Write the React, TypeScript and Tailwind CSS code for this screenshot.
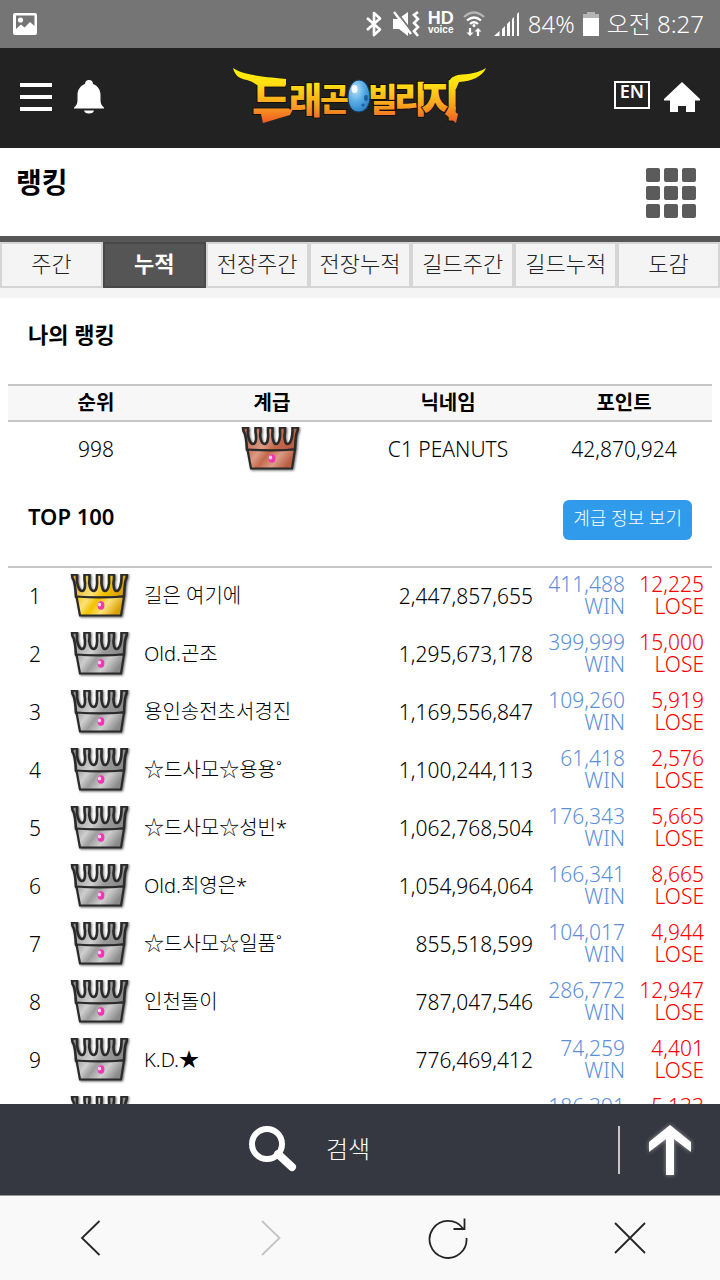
const WEEK_TABS = ["주간", "누적", "전장주간", "전장누적", "길드주간", "길드누적", "도감"];

type CrownTone = "gold" | "silver" | "bronze";

type Player = {
  rank: number;
  tone: CrownTone;
  name: string;
  points: string;
  win: string;
  lose: string;
};

const PLAYERS: Player[] = [
  { rank: 1, tone: "gold", name: "길은 여기에", points: "2,447,857,655", win: "411,488", lose: "12,225" },
  { rank: 2, tone: "silver", name: "Old.곤조", points: "1,295,673,178", win: "399,999", lose: "15,000" },
  { rank: 3, tone: "silver", name: "용인송전초서경진", points: "1,169,556,847", win: "109,260", lose: "5,919" },
  { rank: 4, tone: "silver", name: "☆드사모☆용용˚", points: "1,100,244,113", win: "61,418", lose: "2,576" },
  { rank: 5, tone: "silver", name: "☆드사모☆성빈*", points: "1,062,768,504", win: "176,343", lose: "5,665" },
  { rank: 6, tone: "silver", name: "Old.최영은*", points: "1,054,964,064", win: "166,341", lose: "8,665" },
  { rank: 7, tone: "silver", name: "☆드사모☆일품˚", points: "855,518,599", win: "104,017", lose: "4,944" },
  { rank: 8, tone: "silver", name: "인천돌이", points: "787,047,546", win: "286,772", lose: "12,947" },
  { rank: 9, tone: "silver", name: "K.D.★", points: "776,469,412", win: "74,259", lose: "4,401" },
  { rank: 10, tone: "silver", name: "", points: "", win: "186,391", lose: "5,133" },
];

// edge, shine, base
const TONES: Record<CrownTone, [string, string, string]> = {
  gold: ["#d9a006", "#fbe27c", "#f2c200"],
  silver: ["#8a8a8a", "#cfcfcf", "#9c9c9c"],
  bronze: ["#b85e43", "#dc9c85", "#c4694c"],
};

function Crown({ tone, id }: { tone: CrownTone; id: string }) {
  const [edge, shine, base] = TONES[tone];
  return (
    <svg width="62" height="46" viewBox="0 0 62 46" className="block" aria-hidden="true">
      <defs>
        <linearGradient id={id} x1="0" y1="0" x2="1" y2="0.2">
          <stop offset="0" stopColor={edge} />
          <stop offset="0.5" stopColor={shine} />
          <stop offset="0.7" stopColor={base} />
          <stop offset="1" stopColor={edge} />
        </linearGradient>
        <linearGradient id={`${id}-band`} x1="0" y1="0" x2="1" y2="0.3">
          <stop offset="0" stopColor={base} />
          <stop offset="0.25" stopColor={shine} />
          <stop offset="0.45" stopColor={base} />
          <stop offset="0.7" stopColor={shine} />
          <stop offset="1" stopColor={edge} />
        </linearGradient>
        <filter id={`${id}-shadow`} x="-10%" y="-10%" width="120%" height="125%">
          <feDropShadow dx="1" dy="1" stdDeviation="1" floodColor="#000" floodOpacity="0.6" />
        </filter>
      </defs>
      <g filter={`url(#${id}-shadow)`} stroke="#2b2a29" strokeWidth="2.600" strokeLinejoin="round">
        <path
          d="M2 0.500 H7 V4 C6.500 8 8.500 17 12 17 C15.500 17 15.500 10 14.500 5 V0.500 H19.500 V5 C18.500 9 20 17 23.500 17 C27 17 27.500 10 27 5 V0.500 H31.500 V5 C31 9 32 17 35 17 C38.500 17 39.500 9 39 5 V0.500 H44 V5 C43 9 43.500 17 46.500 17 C50 17 51.500 9 51.500 4 V0.500 H57 L56.500 4 C54.500 7 54.500 14 54 22.500 C38 24.500 20 24.500 6 23 C5.500 14 5 7 2.500 4 Z"
          fill={`url(#${id})`}
        />
        <path
          d="M6.500 22.500 C20 23.500 40 23.500 54 22.500 L51 41.500 H10 Z"
          fill={`url(#${id}-band)`}
          strokeWidth="2.200"
        />
      </g>
      <ellipse cx="31" cy="31.500" rx="3.400" ry="4.200" fill="#f235b4" />
      <ellipse cx="29.500" cy="30.500" rx="1.700" ry="2" fill="#ffd0ee" />
    </svg>
  );
}

function StatusBar() {
  return (
    <div className="flex h-12 shrink-0 items-center justify-between bg-[#757575] pr-4 pl-3 text-white">
      <svg width="26" height="24" viewBox="0 0 26 24" aria-hidden="true">
        <path
          fillRule="evenodd"
          fill="#fff"
          d="M3 1 H23 Q25 1 25 3 V21 Q25 23 23 23 H3 Q1 23 1 21 V3 Q1 1 3 1 Z M4 3.500 V17 L9 12.500 L12.500 15.500 L18 10 L22.500 14 V3.500 Z"
        />
        <circle cx="8.500" cy="8" r="2.600" fill="#fff" />
      </svg>
      <div className="flex items-center gap-2">
        <svg width="20" height="26" viewBox="0 0 20 26" fill="none" stroke="#fff" strokeWidth="2.600" aria-hidden="true">
          <path d="M3 7 L16 18.500 L10 24 V2 L16 7.500 L3 19" strokeLinejoin="round" />
        </svg>
        <svg width="28" height="26" viewBox="0 0 28 26" aria-hidden="true">
          <path d="M1 8 H6 L16 1 V25 L7 18 H1 Z" fill="#fff" />
          <path d="M4 0 L20 21" stroke="#757575" strokeWidth="2" />
          <path d="M2 1 L19 23" stroke="#fff" strokeWidth="2.400" />
          <path d="M26 1 L22 4 L26 8 L22 12 L26 16 L22 20 L26 25" stroke="#fff" strokeWidth="2.600" fill="none" />
        </svg>
        <div className="text-center font-['Liberation_Sans',sans-serif] font-bold">
          <div className="text-lg leading-3">HD</div>
          <div className="text-[10px] leading-3">voice</div>
        </div>
        <svg width="24" height="26" viewBox="0 0 24 26" fill="none" strokeWidth="2.200" aria-hidden="true">
          <path d="M2 6 Q12 -3 22 6" stroke="#b5b5b5" />
          <path d="M5 9.500 Q12 3.500 19 9.500" stroke="#fff" />
          <path d="M8 13 Q12 9.500 16 13" stroke="#fff" />
          <circle cx="12" cy="14.500" r="1.500" fill="#fff" />
          <path d="M8 17 V23 M16 25 V19" stroke="#fff" />
          <path d="M4.500 21.500 H11.500 L8 25 Z M12.500 20.500 H19.500 L16 17 Z" fill="#fff" />
        </svg>
        <svg width="26" height="26" viewBox="0 0 26 26" fill="#fff" aria-hidden="true">
          <path d="M0 25 L5.500 20 V25 Z M8 18 L11 15 V25 H8 Z M13 13 L16 10 V25 H13 Z M18 8 L20 6 V25 H18 Z M23 3 L25 1 V25 H23 Z" />
        </svg>
        <span className="text-2xl font-light">84%</span>
        <svg width="16" height="26" viewBox="0 0 16 26" aria-hidden="true">
          <path d="M4 1 H12 V3 H16 V7 H0 V3 H4 Z" fill="#b5b5b5" />
          <path d="M0 7 H16 V25 H0 Z" fill="#fff" />
        </svg>
        <span className="text-2xl font-light">오전 8:27</span>
      </div>
    </div>
  );
}

function Logo() {
  return (
    <svg width="256" height="64" viewBox="0 0 256 64" className="block" role="img" aria-label="드래곤빌리지">
      <defs>
        <linearGradient id="fire" gradientUnits="userSpaceOnUse" x1="0" y1="4" x2="0" y2="58">
          <stop offset="0" stopColor="#fff200" />
          <stop offset="0.3" stopColor="#ffdc14" />
          <stop offset="0.65" stopColor="#f9a51f" />
          <stop offset="1" stopColor="#f15a24" />
        </linearGradient>
        <radialGradient id="egg" cx="0.35" cy="0.3" r="0.75">
          <stop offset="0" stopColor="#b9e2f9" />
          <stop offset="0.5" stopColor="#5aaee6" />
          <stop offset="1" stopColor="#2a7fc4" />
        </radialGradient>
      </defs>
      <g
        fill="url(#fire)"
        stroke="#15100c"
        strokeWidth="2"
        paintOrder="stroke"
        className="font-['Noto_Sans_CJK_KR',sans-serif] font-black"
      >
        <text x="20" y="49" fontSize="42">드</text>
        <text x="57" y="49" fontSize="36">래</text>
        <text x="88" y="46" fontSize="32">곤</text>
        <text x="136" y="46" fontSize="32">빌</text>
        <text x="162" y="48" fontSize="36">리</text>
        <text x="189" y="51" fontSize="42">지</text>
      </g>
      <g fill="url(#fire)">
        <path d="M1 3 C10 9 22 11 54 14 V20 H25 C21 17 18 16 15 15 C8 14 3 11 1 3 Z" />
        <path d="M254 3 C246 8 238 9 226 10 C219 12 217 15 217 18 V24 H224 L227 17 C240 16 250 12 254 3 Z" />
        <path d="M29 49 L61 44 L58 50 L31 58 Z" />
        <path d="M217 42 H224 L223 47 L226 49 L224 58 L213 49 Z" />
      </g>
      <path
        d="M127 15 C135 15 138 26 138 32 C138 41 133 47 127 47 C120 47 116 41 116 32 C116 24 120 15 127 15 Z"
        fill="url(#egg)"
        stroke="#123a5c"
      />
      <ellipse cx="122.500" cy="24" rx="3" ry="4" fill="#fff" opacity="0.9" />
      <ellipse cx="134" cy="33" rx="2" ry="3" fill="#1d5f9c" />
      <circle cx="131" cy="40" r="1.500" fill="#1d5f9c" />
    </svg>
  );
}

function Header() {
  return (
    <header className="flex h-[100px] shrink-0 items-center justify-between bg-[#222222] px-5 pb-[2px]">
      <div className="flex items-center gap-5">
        <button type="button" aria-label="메뉴" className="flex w-8 flex-col gap-2">
          <span className="h-1 bg-white" />
          <span className="h-1 bg-white" />
          <span className="h-1 bg-white" />
        </button>
        <button type="button" aria-label="알림">
          <svg width="34" height="34" viewBox="0 0 34 34" fill="#fff">
            <path d="M17 0 C19.500 0 21 1.500 21 4 C26 6 28.500 10 28.500 15 V20 C28.500 24 30 26 32 27.500 V28.500 H2 V27.500 C4 26 5.500 24 5.500 20 V15 C5.500 10 8 6 13 4 C13 1.500 14.500 0 17 0 Z" />
            <path d="M12 30.500 H22 C21.500 32.500 20 33.500 17 33.500 C14 33.500 12.500 32.500 12 30.500 Z" />
          </svg>
        </button>
      </div>
      <a href="#home">
        <Logo />
      </a>
      <div className="flex items-start gap-3">
        <button type="button" className="h-7 w-9 border-2 border-white pb-2 text-lg leading-4 font-semibold text-white">
          EN
        </button>
        <a href="#home" aria-label="홈">
          <svg width="38" height="32" viewBox="0 0 38 32" fill="#fff">
            <path d="M20 1 L38 18 V19.500 H33 V31 H24 V25 H16 V31 H8 V19.500 H2 V18 Z" />
          </svg>
        </a>
      </div>
    </header>
  );
}

function Tabs() {
  return (
    <nav className="grid grid-cols-7 border-t-6 border-[#575757] bg-[#f4f4f4] pb-[10px]">
      {WEEK_TABS.map((tab, i) => (
        <button
          key={tab}
          type="button"
          className={
            i === 1
              ? "h-[46px] border-2 border-[#484848] bg-[#555555] pb-1 text-[22px] leading-8 font-bold whitespace-nowrap text-white"
              : "h-[46px] border-2 border-[#d5d5d5] pb-1 text-[22px] leading-8 font-light whitespace-nowrap text-[#222222]"
          }
        >
          {tab}
        </button>
      ))}
    </nav>
  );
}

function MyRanking() {
  return (
    <section>
      <h2 className="px-5 pt-5 pb-[34px] text-[22px] leading-8 font-bold">나의 랭킹</h2>
      <table className="w-full table-fixed text-center">
        <thead>
          <tr className="h-9 border-y-2 border-[#c6c6c6] bg-[#f7f7f7] text-xl leading-8">
            <th>순위</th>
            <th>계급</th>
            <th>닉네임</th>
            <th>포인트</th>
          </tr>
        </thead>
        <tbody>
          <tr className="h-[57px] text-[21px] font-light">
            <td>998</td>
            <td>
              <div className="flex justify-center">
                <Crown tone="bronze" id="my-crown" />
              </div>
            </td>
            <td>C1 PEANUTS</td>
            <td>42,870,924</td>
          </tr>
        </tbody>
      </table>
    </section>
  );
}

function TopRanking() {
  return (
    <section>
      <div className="flex items-start justify-between border-b-2 border-[#c6c6c6] px-5 pt-[22px] pb-[26px]">
        <h2 className="text-[22px] leading-8 font-semibold">TOP 100</h2>
        <button type="button" className="h-10 rounded-md bg-[#2f9bea] px-[10px] pb-1 text-lg font-light text-white">
          계급 정보 보기
        </button>
      </div>
      <table className="w-full table-fixed text-[21px] leading-[22px] font-light">
        <colgroup>
          <col className="w-[54px]" />
          <col className="w-[74px]" />
          <col />
          <col className="w-[156px]" />
          <col className="w-[92px]" />
          <col className="w-[79px]" />
        </colgroup>
        <tbody>
          {PLAYERS.map((p) => (
            <tr key={p.rank} className="h-[58px]">
              <td className="pb-[2px] text-center">{p.rank}</td>
              <td className="pl-2">
                <Crown tone={p.tone} id={`crown-${p.rank}`} />
              </td>
              <td className="pb-[2px] pl-2 text-xl whitespace-nowrap">{p.name}</td>
              <td className="pr-2 pb-[2px] text-right">{p.points}</td>
              <td className="pr-2 pb-1 text-right text-[#5b8fd9]">
                {p.win}
                <br />
                WIN
              </td>
              <td className="pr-2 pb-1 text-right text-[#ff0000]">
                {p.lose}
                <br />
                LOSE
              </td>
            </tr>
          ))}
        </tbody>
      </table>
    </section>
  );
}

function SearchBar() {
  return (
    <div className="flex h-[91px] shrink-0 items-center bg-[#363841] text-white">
      <button type="button" className="flex flex-1 items-center justify-center gap-7 pb-[2px] text-2xl font-light">
        <svg width="50" height="48" viewBox="0 0 50 48" fill="none" stroke="#fff" aria-hidden="true">
          <circle cx="19" cy="19" r="15" strokeWidth="6" />
          <path d="M30 29 L44 42" strokeWidth="8" strokeLinecap="round" />
        </svg>
        검색
      </button>
      <button type="button" aria-label="맨 위로" className="flex h-12 w-[102px] items-center justify-center border-l-2 border-[#c9c5c9]">
        <svg width="50" height="56" viewBox="0 0 50 56" fill="#fff" className="drop-shadow-[0_0_2px_#ffffff80]">
          <path d="M25 3 L46 20 V30 L29 17 V53 H21 V17 L4 30 V20 Z" />
        </svg>
      </button>
    </div>
  );
}

function BrowserNav() {
  return (
    <nav className="grid h-[85px] shrink-0 grid-cols-4 items-center justify-items-center border-t border-[#999999] bg-[#f9f9f9]">
      <button type="button" aria-label="뒤로">
        <svg width="40" height="40" viewBox="0 0 40 40" fill="none" stroke="#252525" strokeWidth="1.800">
          <path d="M29.500 3 L12 20 L29.500 37" />
        </svg>
      </button>
      <button type="button" aria-label="앞으로" disabled>
        <svg width="40" height="40" viewBox="0 0 40 40" fill="none" stroke="#c4c4c4" strokeWidth="1.800">
          <path d="M12 3 L29.500 20 L12 37" />
        </svg>
      </button>
      <button type="button" aria-label="새로고침">
        <svg width="44" height="44" viewBox="0 0 44 44" fill="none" stroke="#252525" strokeWidth="1.800">
          <path d="M38.500 22 A18.500 18.500 0 1 1 35 12.500 M36.500 2.500 V13 H25.500" />
        </svg>
      </button>
      <button type="button" aria-label="닫기">
        <svg width="40" height="40" viewBox="0 0 40 40" fill="none" stroke="#252525" strokeWidth="1.800">
          <path d="M5 5 L35 35 M35 5 L5 35" />
        </svg>
      </button>
    </nav>
  );
}

export default function App() {
  return (
    <div className="flex h-screen flex-col overflow-hidden bg-white font-['Noto_Sans','Noto_Sans_CJK_KR',sans-serif] text-black">
      <StatusBar />
      <Header />
      <main className="min-h-0 flex-1 overflow-y-auto [scrollbar-width:none]">
        <div className="flex h-[88px] items-start justify-between pt-5 pr-6 pl-4">
          <h1 className="text-[28px] leading-7 font-bold">랭킹</h1>
          <button type="button" aria-label="전체 메뉴" className="grid grid-cols-3 gap-1">
            {Array.from({ length: 9 }, (_, i) => (
              <span key={i} className="size-[14px] rounded-xs bg-[#5b5b5b]" />
            ))}
          </button>
        </div>
        <Tabs />
        <div className="px-2">
          <MyRanking />
          <TopRanking />
        </div>
      </main>
      <SearchBar />
      <BrowserNav />
    </div>
  );
}
